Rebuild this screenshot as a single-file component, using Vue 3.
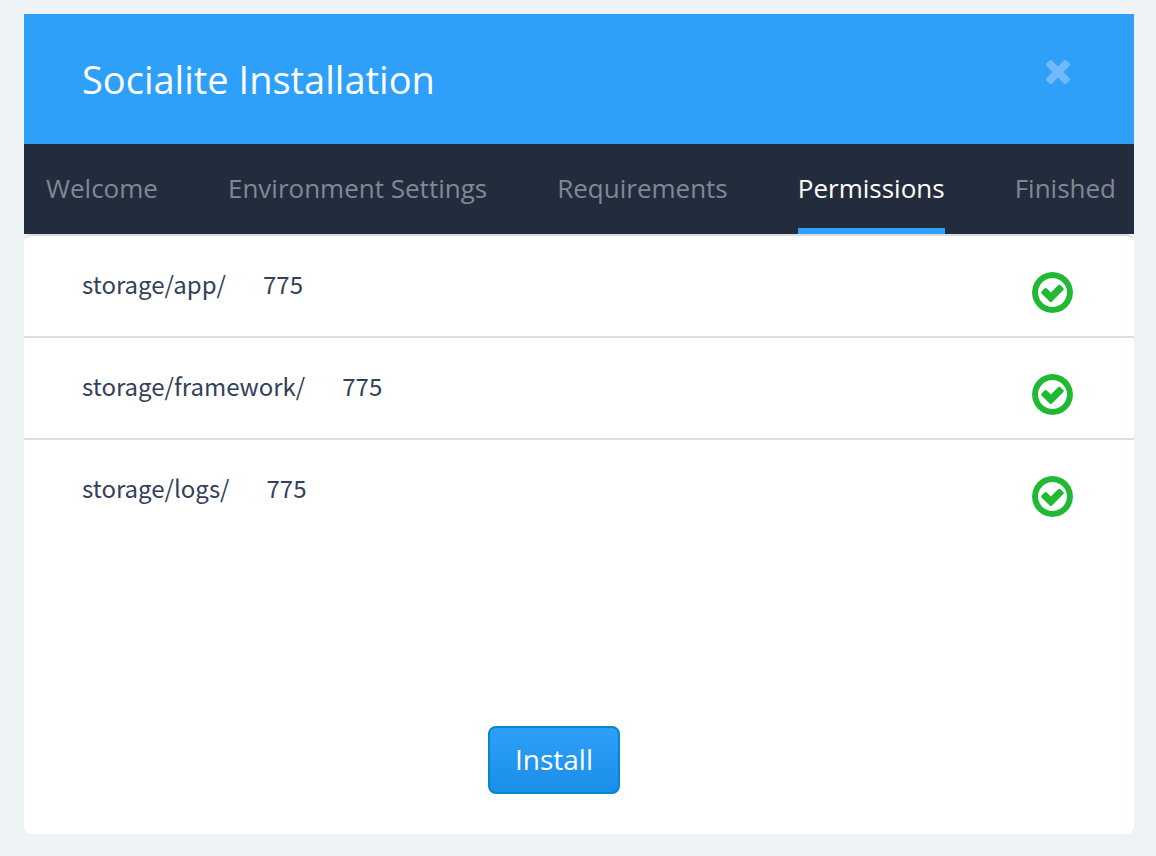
<script setup>
const steps = [
  { label: 'Welcome', href: '#welcome' },
  { label: 'Environment Settings', href: '#environment' },
  { label: 'Requirements', href: '#requirements' },
  { label: 'Permissions', href: '#permissions', current: true },
  { label: 'Finished', href: '#finished' },
]

const folders = [
  { path: 'storage/app/', mode: '775' },
  { path: 'storage/framework/', mode: '775' },
  { path: 'storage/logs/', mode: '775' },
]
</script>

<template>
  <main class="installer">
    <header class="head">
      <h1 class="title">Socialite Installation</h1>
      <button class="close" type="button" aria-label="Close">
        <svg class="close-icon" viewBox="110 366 1188 1188" aria-hidden="true">
          <path d="M1298 1322q0 40-28 68l-136 136q-28 28-68 28t-68-28l-294-294-294 294q-28 28-68 28t-68-28l-136-136q-28-28-28-68t28-68l294-294-294-294q-28-28-28-68t28-68l136-136q28-28 68-28t68 28l294 294 294-294q28-28 68-28t68 28l136 136q28 28 28 68t-28 68l-294 294 294 294q28 28 28 68z" />
        </svg>
      </button>
    </header>

    <nav class="steps" aria-label="Installation steps">
      <a
        v-for="step in steps"
        :key="step.label"
        class="step"
        :class="{ current: step.current }"
        :href="step.href"
        :aria-current="step.current ? 'step' : undefined"
      >{{ step.label }}</a>
    </nav>

    <section class="body">
      <ul class="list">
        <li v-for="folder in folders" :key="folder.path" class="row">
          <span class="path">{{ folder.path }}</span>
          <span class="mode">{{ folder.mode }}</span>
          <svg class="check" viewBox="0 128 1536 1536" role="img" aria-label="Passed">
            <path d="M1171 813l-422 422q-19 19-45 19t-45-19l-294-294q-19-19-19-45t19-45l102-102q19-19 45-19t45 19l147 147 275-275q19-19 45-19t45 19l102 102q19 19 19 45t-19 45zm141 83q0-148-73-273t-198-198-273-73-273 73-198 198-73 273 73 273 198 198 273 73 273-73 198-198 73-273zm224 0q0 209-103 385.500t-279.500 279.500-385.500 103-385.500-103-279.500-279.500-103-385.500 103-385.500 279.500-279.500 385.500-103 385.500 103 279.500 279.500 103 385.500z" />
          </svg>
        </li>
      </ul>
      <div class="actions">
        <button class="install" type="button">Install</button>
      </div>
    </section>
  </main>
</template>

<style>
body {
  background: #eef3f6;
}
</style>

<style scoped>
.installer {
  margin: 14px 22px 22px 24px;
  font-family: "Open Sans", "Noto Sans", sans-serif;
}

.head {
  display: flex;
  align-items: flex-start;
  justify-content: space-between;
  padding: 40px 64px 40px 58px;
  background: #2ea0f9;
}

.title {
  margin: 0;
  color: #fff;
  font-size: 38px;
  font-weight: 500;
  line-height: 50px;
}

.close {
  display: flex;
  margin: 6px 0 0;
  padding: 0;
  border: 0;
  background: none;
  cursor: pointer;
}

.close-icon {
  width: 24px;
  height: 24px;
  fill: #6fb9fd;
}

.steps {
  display: flex;
  justify-content: space-between;
  padding: 0 18px 0 22px;
  background: #232c3d;
}

.step {
  padding: 26px 0 22px;
  border-bottom: 6px solid transparent;
  color: #7f8994;
  font-size: 26px;
  line-height: 36px;
  text-decoration: none;
  white-space: nowrap;
}

.current {
  border-bottom-color: #2ea0f9;
  color: #fff;
  font-weight: 500;
}

.body {
  overflow: hidden;
  border-top: 2px solid #dcdcdc;
  border-radius: 8px;
  background: #fff;
}

.list {
  margin: 0;
  padding: 0;
  list-style: none;
}

.row {
  display: flex;
  align-items: flex-start;
  gap: 37px;
  padding: 30px 61px 22px 58px;
  border-bottom: 2px solid #dcdcdc;
  color: #34405a;
  font-family: "Noto Sans CJK SC", "Open Sans", sans-serif;
  font-size: 24px;
  line-height: 36px;
}

.row:last-child {
  border-bottom: 0;
}

.check {
  width: 41px;
  height: 41px;
  margin: 6px 0 1px auto;
  fill: #1fb934;
}

.actions {
  display: flex;
  justify-content: center;
  padding: 186px 50px 40px 0;
}

.install {
  padding: 11px 25px 13px;
  border: 2px solid #0389c3;
  border-radius: 8px;
  background: linear-gradient(#2ea0f9, #1a8ee8);
  color: #fff;
  font-family: inherit;
  font-size: 28px;
  font-weight: 500;
  line-height: 40px;
  cursor: pointer;
}
</style>
